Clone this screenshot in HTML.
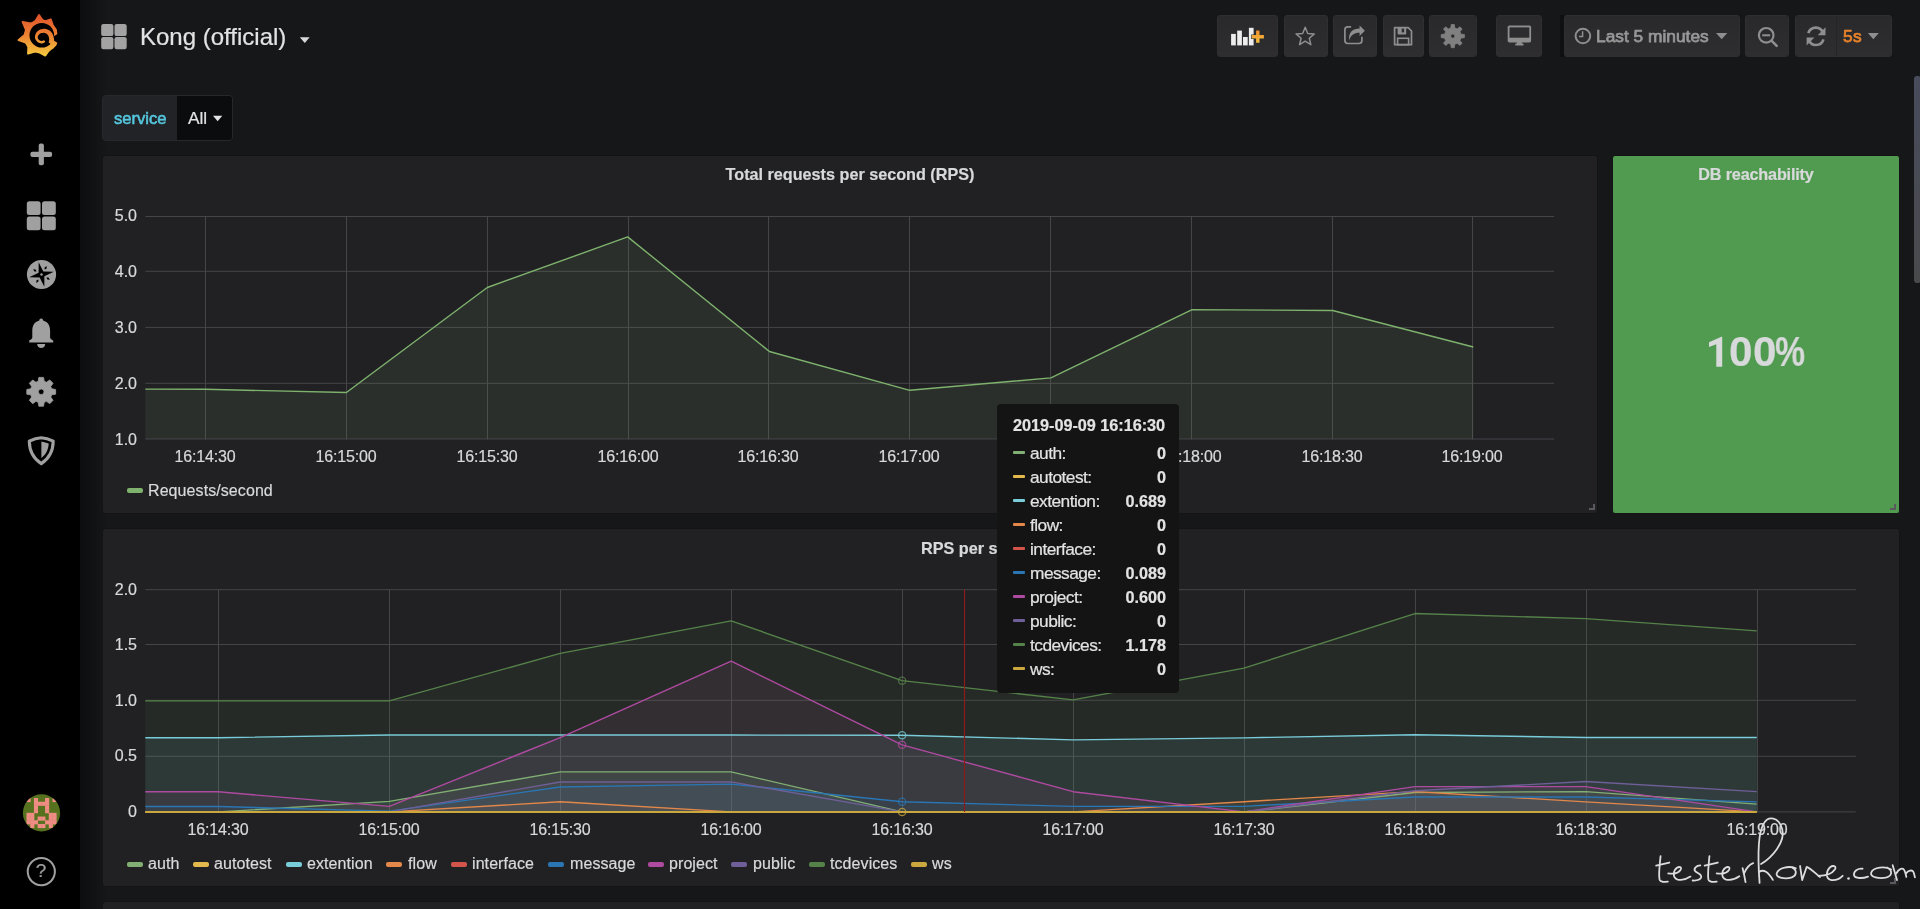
<!DOCTYPE html><html><head><meta charset="utf-8"><style>
html,body{margin:0;padding:0;} body{width:1920px;height:909px;overflow:hidden;background:#161719;font-family:"Liberation Sans", sans-serif;position:relative;-webkit-text-stroke:0.2px currentColor;}
.btn{position:absolute;top:15px;height:42px;box-sizing:border-box;border:1px solid #2f2f32;border-radius:3px;background:linear-gradient(to bottom,#29292c,#2e2e31);}
div{will-change:transform;}
</style></head><body>
<div style="position:absolute;left:80px;top:0;width:26px;height:909px;background:linear-gradient(to right,rgba(0,0,0,0.4),rgba(0,0,0,0));"></div>
<div style="position:absolute;left:102px;top:155px;width:1496px;height:359px;background:#212124;border-radius:3px;box-sizing:border-box;border:1px solid #141414;"></div>
<div style="position:absolute;left:1612px;top:155px;width:288px;height:359px;background:#519b50;border-radius:3px;box-sizing:border-box;border:1px solid #141414;"></div>
<div style="position:absolute;left:102px;top:528px;width:1798px;height:359px;background:#212124;border-radius:3px;box-sizing:border-box;border:1px solid #141414;"></div>
<div style="position:absolute;left:102px;top:901px;width:1798px;height:39px;background:#212124;border-radius:3px;box-sizing:border-box;border:1px solid #141414;"></div>
<svg style="position:absolute;left:0;top:0" width="1920" height="909"><line x1="145.3" y1="439.0" x2="1554.1" y2="439.0" stroke="#454548" stroke-width="1"/><line x1="145.3" y1="383.3" x2="1554.1" y2="383.3" stroke="#454548" stroke-width="1"/><line x1="145.3" y1="327.4" x2="1554.1" y2="327.4" stroke="#454548" stroke-width="1"/><line x1="145.3" y1="271.3" x2="1554.1" y2="271.3" stroke="#454548" stroke-width="1"/><line x1="145.3" y1="216.5" x2="1554.1" y2="216.5" stroke="#454548" stroke-width="1"/><line x1="205.5" y1="216" x2="205.5" y2="439.5" stroke="#454548" stroke-width="1"/><line x1="346.5" y1="216" x2="346.5" y2="439.5" stroke="#454548" stroke-width="1"/><line x1="487.5" y1="216" x2="487.5" y2="439.5" stroke="#454548" stroke-width="1"/><line x1="628.5" y1="216" x2="628.5" y2="439.5" stroke="#454548" stroke-width="1"/><line x1="768.5" y1="216" x2="768.5" y2="439.5" stroke="#454548" stroke-width="1"/><line x1="909.5" y1="216" x2="909.5" y2="439.5" stroke="#454548" stroke-width="1"/><line x1="1050.5" y1="216" x2="1050.5" y2="439.5" stroke="#454548" stroke-width="1"/><line x1="1191.5" y1="216" x2="1191.5" y2="439.5" stroke="#454548" stroke-width="1"/><line x1="1332.5" y1="216" x2="1332.5" y2="439.5" stroke="#454548" stroke-width="1"/><line x1="1472.5" y1="216" x2="1472.5" y2="439.5" stroke="#454548" stroke-width="1"/><polygon points="145.3,389.1 205.1,389.3 346.4,392.5 487.3,287.5 627.7,236.9 769.4,351.5 909.8,390.3 1050.9,377.9 1192.1,309.6 1332.7,310.5 1473.3,347 1473.3,438.8 145.3,438.8" fill="#7EB26D" fill-opacity="0.1"/><polyline points="145.3,389.1 205.1,389.3 346.4,392.5 487.3,287.5 627.7,236.9 769.4,351.5 909.8,390.3 1050.9,377.9 1192.1,309.6 1332.7,310.5 1473.3,347" fill="none" stroke="#7EB26D" stroke-width="1.4" stroke-linejoin="round"/><line x1="145.3" y1="811.9" x2="1855.8" y2="811.9" stroke="#454548" stroke-width="1"/><line x1="145.3" y1="756.3" x2="1855.8" y2="756.3" stroke="#454548" stroke-width="1"/><line x1="145.3" y1="700.3" x2="1855.8" y2="700.3" stroke="#454548" stroke-width="1"/><line x1="145.3" y1="644.5" x2="1855.8" y2="644.5" stroke="#454548" stroke-width="1"/><line x1="145.3" y1="589.7" x2="1855.8" y2="589.7" stroke="#454548" stroke-width="1"/><line x1="218.5" y1="589.2" x2="218.5" y2="812.4" stroke="#454548" stroke-width="1"/><line x1="389.5" y1="589.2" x2="389.5" y2="812.4" stroke="#454548" stroke-width="1"/><line x1="560.5" y1="589.2" x2="560.5" y2="812.4" stroke="#454548" stroke-width="1"/><line x1="731.5" y1="589.2" x2="731.5" y2="812.4" stroke="#454548" stroke-width="1"/><line x1="902.5" y1="589.2" x2="902.5" y2="812.4" stroke="#454548" stroke-width="1"/><line x1="1073.5" y1="589.2" x2="1073.5" y2="812.4" stroke="#454548" stroke-width="1"/><line x1="1244.5" y1="589.2" x2="1244.5" y2="812.4" stroke="#454548" stroke-width="1"/><line x1="1415.5" y1="589.2" x2="1415.5" y2="812.4" stroke="#454548" stroke-width="1"/><line x1="1586.5" y1="589.2" x2="1586.5" y2="812.4" stroke="#454548" stroke-width="1"/><line x1="1757.5" y1="589.2" x2="1757.5" y2="812.4" stroke="#454548" stroke-width="1"/><polygon points="145.3,811.9 218.4,811.9 389.33,801.35 560.26,771.92 731.19,771.92 902.12,811.9 1073.05,811.9 1243.98,811.9 1414.91,792.47 1585.84,791.58 1756.77,804.13 1756.77,811.9 145.3,811.9" fill="#82af74" fill-opacity="0.1"/><polygon points="145.3,737.72 218.4,737.72 389.33,735.05 560.26,735.05 731.19,735.05 902.12,735.28 1073.05,739.83 1243.98,737.83 1414.91,734.72 1585.84,737.5 1756.77,737.5 1756.77,811.9 145.3,811.9" fill="#79ccd9" fill-opacity="0.1"/><polygon points="145.3,811.9 218.4,811.9 389.33,811.9 560.26,801.79 731.19,811.9 902.12,811.9 1073.05,811.9 1243.98,801.68 1414.91,791.58 1585.84,801.91 1756.77,811.9 1756.77,811.9 145.3,811.9" fill="#e3884a" fill-opacity="0.1"/><polygon points="145.3,806.57 218.4,806.57 389.33,811.12 560.26,787.02 731.19,784.14 902.12,801.79 1073.05,806.35 1243.98,806.35 1414.91,797.02 1585.84,797.02 1756.77,801.91 1756.77,811.9 145.3,811.9" fill="#2a75b3" fill-opacity="0.1"/><polygon points="145.3,791.8 218.4,791.8 389.33,806.35 560.26,737.61 731.19,661.09 902.12,744.83 1073.05,791.69 1243.98,811.9 1414.91,786.58 1585.84,786.58 1756.77,811.9 1756.77,811.9 145.3,811.9" fill="#af4aa1" fill-opacity="0.1"/><polygon points="145.3,811.9 218.4,811.9 389.33,811.9 560.26,782.03 731.19,781.92 902.12,811.9 1073.05,811.9 1243.98,811.9 1414.91,790.8 1585.84,781.47 1756.77,791.58 1756.77,811.9 145.3,811.9" fill="#6f5f98" fill-opacity="0.1"/><polygon points="145.3,700.85 218.4,700.85 389.33,700.85 560.26,653.43 731.19,620.89 902.12,680.64 1073.05,699.85 1243.98,668.09 1414.91,613.56 1585.84,618.67 1756.77,630.89 1756.77,811.9 145.3,811.9" fill="#558249" fill-opacity="0.1"/><polyline points="145.3,811.9 218.4,811.9 389.33,801.35 560.26,771.92 731.19,771.92 902.12,811.9 1073.05,811.9 1243.98,811.9 1414.91,792.47 1585.84,791.58 1756.77,804.13" fill="none" stroke="#82af74" stroke-width="1.4" stroke-linejoin="round"/><polyline points="145.3,811.9 218.4,811.9 389.33,811.9 560.26,811.9 731.19,811.9 902.12,811.9 1073.05,811.9 1243.98,811.9 1414.91,811.9 1585.84,811.9 1756.77,811.9" fill="none" stroke="#e3b84c" stroke-width="1.4" stroke-linejoin="round"/><polyline points="145.3,737.72 218.4,737.72 389.33,735.05 560.26,735.05 731.19,735.05 902.12,735.28 1073.05,739.83 1243.98,737.83 1414.91,734.72 1585.84,737.5 1756.77,737.5" fill="none" stroke="#79ccd9" stroke-width="1.4" stroke-linejoin="round"/><polyline points="145.3,811.9 218.4,811.9 389.33,811.9 560.26,801.79 731.19,811.9 902.12,811.9 1073.05,811.9 1243.98,801.68 1414.91,791.58 1585.84,801.91 1756.77,811.9" fill="none" stroke="#e3884a" stroke-width="1.4" stroke-linejoin="round"/><polyline points="145.3,811.9 218.4,811.9 389.33,811.9 560.26,811.9 731.19,811.9 902.12,811.9 1073.05,811.9 1243.98,811.9 1414.91,811.9 1585.84,811.9 1756.77,811.9" fill="none" stroke="#d2544a" stroke-width="1.4" stroke-linejoin="round"/><polyline points="145.3,806.57 218.4,806.57 389.33,811.12 560.26,787.02 731.19,784.14 902.12,801.79 1073.05,806.35 1243.98,806.35 1414.91,797.02 1585.84,797.02 1756.77,801.91" fill="none" stroke="#2a75b3" stroke-width="1.4" stroke-linejoin="round"/><polyline points="145.3,791.8 218.4,791.8 389.33,806.35 560.26,737.61 731.19,661.09 902.12,744.83 1073.05,791.69 1243.98,811.9 1414.91,786.58 1585.84,786.58 1756.77,811.9" fill="none" stroke="#af4aa1" stroke-width="1.4" stroke-linejoin="round"/><polyline points="145.3,811.9 218.4,811.9 389.33,811.9 560.26,782.03 731.19,781.92 902.12,811.9 1073.05,811.9 1243.98,811.9 1414.91,790.8 1585.84,781.47 1756.77,791.58" fill="none" stroke="#6f5f98" stroke-width="1.4" stroke-linejoin="round"/><polyline points="145.3,700.85 218.4,700.85 389.33,700.85 560.26,653.43 731.19,620.89 902.12,680.64 1073.05,699.85 1243.98,668.09 1414.91,613.56 1585.84,618.67 1756.77,630.89" fill="none" stroke="#558249" stroke-width="1.4" stroke-linejoin="round"/><polyline points="145.3,811.9 218.4,811.9 389.33,811.9 560.26,811.9 731.19,811.9 902.12,811.9 1073.05,811.9 1243.98,811.9 1414.91,811.9 1585.84,811.9 1756.77,811.9" fill="none" stroke="#caa83d" stroke-width="1.4" stroke-linejoin="round"/><line x1="145.3" y1="812" x2="1756.7700000000002" y2="812" stroke="#caa83d" stroke-width="2"/><line x1="964.5" y1="589.8" x2="964.5" y2="811.9" stroke="#8a1c1c" stroke-width="1.2"/><circle cx="902.12" cy="680.64" r="3.6" fill="none" stroke="#558249" stroke-width="1.3" stroke-opacity="0.75"/><circle cx="902.12" cy="735.28" r="3.6" fill="none" stroke="#79ccd9" stroke-width="1.3" stroke-opacity="0.75"/><circle cx="902.12" cy="744.83" r="3.6" fill="none" stroke="#af4aa1" stroke-width="1.3" stroke-opacity="0.75"/><circle cx="902.12" cy="801.79" r="3.6" fill="none" stroke="#2a75b3" stroke-width="1.3" stroke-opacity="0.75"/><circle cx="902.12" cy="811.9" r="3.6" fill="none" stroke="#caa83d" stroke-width="1.3" stroke-opacity="0.75"/></svg>
<div style="position:absolute;left:0;top:0;width:80px;height:909px;background:#000;"></div>
<svg style="position:absolute;left:0;top:0" width="80" height="70"><defs><linearGradient id="lg" gradientUnits="userSpaceOnUse" x1="0" y1="14" x2="0" y2="57"><stop offset="0" stop-color="#e0502a"/><stop offset="0.5" stop-color="#ec8333"/><stop offset="1" stop-color="#f6cd40"/></linearGradient></defs><polygon points="22.6,21.9 30.88,23.41 33.3,22.32 35.55,20.9 39,15 42.45,20.07 44.35,20.78 46.36,20.94 50.7,19.4 52.61,24.92 54.16,27.44 55.92,29.82 56.4,34.2 57.28,37.24 56.64,39.26 56.53,41.38 55.7,44.5 52.86,47.62 50.56,49.15 48.47,50.95 45.3,55.5 40.35,52.79 37.62,52.06 34.82,51.63 28.1,53.6 28.35,46.96 27.22,44.7 25.74,42.66 18.6,40 24.56,34.94 25.42,32.36 25.93,29.7" fill="url(#lg)" stroke="url(#lg)" stroke-width="2.0" stroke-linejoin="round"/><circle cx="41.8" cy="35.3" r="12.3" fill="#000"/><polygon points="57.5,34 54,36.3 53.8,40.6 56.9,42.6 62,42.6 62,34" fill="#000"/><polygon points="52.73,45.76 53.08,45.03 53.38,44.28 53.62,43.52 53.81,42.76 53.94,42 54.03,41.24 54.06,40.49 54.04,39.75 53.98,39.03 53.87,38.32 53.71,37.63 53.6,36.96 53.46,36.3 53.28,35.66 53.06,35.03 52.8,34.42 52.5,33.84 52.17,33.28 51.81,32.75 51.42,32.25 51,31.77 50.56,31.33 50.09,30.92 49.59,30.54 49.08,30.2 48.56,29.9 48.02,29.63 47.47,29.4 46.9,29.21 46.34,29.05 45.77,28.94 45.19,28.86 44.62,28.82 44.05,28.81 43.49,28.84 42.94,28.9 42.39,28.95 41.85,29.03 41.32,29.15 40.79,29.3 40.28,29.48 39.78,29.69 39.3,29.93 38.84,30.2 38.39,30.5 37.97,30.83 37.57,31.18 37.19,31.56 36.84,31.95 36.52,32.37 36.22,32.81 35.95,33.26 35.72,33.72 35.51,34.2 35.33,34.69 35.19,35.19 35.08,35.69 35,36.2 34.95,36.71 34.94,37.22 34.98,37.73 35.1,38.23 35.25,38.72 35.44,39.18 35.65,39.63 35.88,40.06 36.14,40.47 36.43,40.85 36.73,41.21 37.05,41.54 37.39,41.85 37.75,42.13 38.11,42.39 38.49,42.61 38.88,42.81 39.27,42.98 39.67,43.12 40.07,43.23 40.47,43.32 40.87,43.37 41.27,43.4 41.66,43.4 42.05,43.38 42.42,43.33 42.79,43.25 43.15,43.14 43.48,42.99 43.8,42.81 44.1,42.62 44.38,42.41 43.83,40.48 43.64,40.53 43.46,40.57 43.27,40.59 43.08,40.6 42.89,40.65 42.69,40.73 42.47,40.8 42.25,40.85 42.02,40.89 41.78,40.91 41.54,40.91 41.29,40.9 41.03,40.86 40.78,40.81 40.52,40.74 40.26,40.65 40.01,40.53 39.76,40.4 39.51,40.25 39.27,40.07 39.04,39.88 38.82,39.67 38.61,39.44 38.41,39.19 38.23,38.92 38.07,38.63 37.92,38.33 37.79,38.02 37.68,37.69 37.68,37.35 37.73,37.02 37.8,36.69 37.89,36.37 38.01,36.06 38.14,35.76 38.29,35.46 38.46,35.18 38.64,34.91 38.84,34.66 39.05,34.42 39.28,34.19 39.52,33.98 39.78,33.79 40.04,33.62 40.31,33.46 40.59,33.32 40.88,33.2 41.17,33.1 41.47,33.02 41.76,32.95 42.07,32.91 42.37,32.89 42.67,32.88 42.97,32.9 43.27,32.86 43.57,32.84 43.88,32.84 44.19,32.86 44.5,32.9 44.81,32.96 45.12,33.04 45.43,33.14 45.73,33.26 46.03,33.4 46.32,33.56 46.6,33.75 46.87,33.95 47.13,34.17 47.38,34.41 47.61,34.67 47.83,34.94 48.03,35.23 48.22,35.54 48.38,35.85 48.53,36.19 48.66,36.53 48.76,36.88 48.84,37.25 48.91,37.62 49.02,38 49.11,38.39 49.17,38.8 49.2,39.22 49.21,39.65 49.19,40.09 49.13,40.53 49.04,40.97 48.93,41.41 48.78,41.85 48.59,42.29" fill="url(#lg)"/><circle cx="44.10" cy="41.45" r="1.0" fill="url(#lg)"/></svg>
<svg style="position:absolute;left:0;top:0" width="80" height="909"><rect x="38.7" y="143.5" width="5.2" height="21.7" rx="2" fill="#a0a0a0"/><rect x="30.4" y="151.8" width="21.7" height="5.2" rx="2" fill="#a0a0a0"/><rect x="26.8" y="201.2" width="13.8" height="13.8" rx="2.5" fill="#a0a0a0"/><rect x="26.8" y="216.4" width="13.8" height="13.8" rx="2.5" fill="#a0a0a0"/><rect x="42.0" y="201.2" width="13.8" height="13.8" rx="2.5" fill="#a0a0a0"/><rect x="42.0" y="216.4" width="13.8" height="13.8" rx="2.5" fill="#a0a0a0"/><circle cx="41.5" cy="274.5" r="14.6" fill="#a0a0a0"/><polygon points="38.67,262.22 43.3,271.62 53.78,271.67 44.38,276.3 44.33,286.78 39.7,277.38 29.22,277.33 38.62,272.7" fill="#000"/><polygon points="44.57,269.58 46.46,268.64 46.75,266.1 44.59,267.47" fill="#000"/><polygon points="46.42,277.57 47.36,279.46 49.9,279.75 48.53,277.59" fill="#000"/><polygon points="38.43,279.42 36.54,280.36 36.25,282.9 38.41,281.53" fill="#000"/><polygon points="36.58,271.43 35.64,269.54 33.1,269.25 34.47,271.41" fill="#000"/><circle cx="41.5" cy="274.5" r="1.2" fill="#a0a0a0"/><path d="M41.2,318.6 C39.6,318.6 39.3,320.2 39.3,320.6 C34.2,322 32.3,326 32.3,331 L32.3,337.5 C32.3,339 30.4,339.6 29.2,340.6 L29.2,342.6 L53.2,342.6 L53.2,340.6 C52,339.6 50.1,339 50.1,337.5 L50.1,331 C50.1,326 48.2,322 43.1,320.6 C43.1,320.2 42.8,318.6 41.2,318.6 Z" fill="#a0a0a0"/><path d="M37.2,344 L45.2,344 C45.2,346.5 43.4,348 41.2,348 C39,348 37.2,346.5 37.2,344 Z" fill="#a0a0a0"/><path d="M51.67,388.78 L55.61,389.45 L55.61,394.15 L51.67,394.82 L51.27,395.97 L50.74,397.07 L53.05,400.32 L49.72,403.65 L46.47,401.34 L45.37,401.87 L44.22,402.27 L43.55,406.21 L38.85,406.21 L38.18,402.27 L37.03,401.87 L35.93,401.34 L32.68,403.65 L29.35,400.32 L31.66,397.07 L31.13,395.97 L30.73,394.82 L26.79,394.15 L26.79,389.45 L30.73,388.78 L31.13,387.63 L31.66,386.53 L29.35,383.28 L32.68,379.95 L35.93,382.26 L37.03,381.73 L38.18,381.33 L38.85,377.39 L43.55,377.39 L44.22,381.33 L45.37,381.73 L46.47,382.26 L49.72,379.95 L53.05,383.28 L50.74,386.53 L51.27,387.63 Z M44.0,391.8 a2.8,2.8 0 1,0 -5.6,0 a2.8,2.8 0 1,0 5.6,0 Z" fill="#a0a0a0" fill-rule="evenodd" stroke="#a0a0a0" stroke-width="0.8" stroke-linejoin="round"/><path d="M41.25,437.7 C45.3,437.8 49.5,439.2 53.2,441.2 C53.1,450.8 49.2,458.4 41.25,463.6 C33.3,458.4 29.4,450.8 29.3,441.2 C33,439.2 37.2,437.8 41.25,437.7 Z" fill="none" stroke="#a0a0a0" stroke-width="3.1" stroke-linejoin="round"/><path d="M41.4,441.4 L48.7,443.5 C48.4,449.6 46,454.4 41.4,458.0 Z" fill="#a0a0a0"/><defs><clipPath id="avc"><circle cx="41.5" cy="812.9" r="18.6"/></clipPath></defs><g clip-path="url(#avc)"><rect x="20" y="790" width="45" height="45" fill="#56721f"/><rect x="26.50" y="798.00" width="4.11" height="4.11" fill="#ef8c84"/><rect x="33.92" y="798.00" width="4.11" height="4.11" fill="#ef8c84"/><rect x="45.05" y="798.00" width="4.11" height="4.11" fill="#ef8c84"/><rect x="52.47" y="798.00" width="4.11" height="4.11" fill="#ef8c84"/><rect x="33.92" y="801.71" width="4.11" height="4.11" fill="#ef8c84"/><rect x="37.63" y="801.71" width="4.11" height="4.11" fill="#ef8c84"/><rect x="41.34" y="801.71" width="4.11" height="4.11" fill="#ef8c84"/><rect x="45.05" y="801.71" width="4.11" height="4.11" fill="#ef8c84"/><rect x="33.92" y="805.42" width="4.11" height="4.11" fill="#ef8c84"/><rect x="45.05" y="805.42" width="4.11" height="4.11" fill="#ef8c84"/><rect x="33.92" y="809.13" width="4.11" height="4.11" fill="#ef8c84"/><rect x="45.05" y="809.13" width="4.11" height="4.11" fill="#ef8c84"/><rect x="26.50" y="812.84" width="4.11" height="4.11" fill="#ef8c84"/><rect x="30.21" y="812.84" width="4.11" height="4.11" fill="#ef8c84"/><rect x="48.76" y="812.84" width="4.11" height="4.11" fill="#ef8c84"/><rect x="52.47" y="812.84" width="4.11" height="4.11" fill="#ef8c84"/><rect x="26.50" y="816.55" width="4.11" height="4.11" fill="#ef8c84"/><rect x="30.21" y="816.55" width="4.11" height="4.11" fill="#ef8c84"/><rect x="37.63" y="816.55" width="4.11" height="4.11" fill="#ef8c84"/><rect x="41.34" y="816.55" width="4.11" height="4.11" fill="#ef8c84"/><rect x="48.76" y="816.55" width="4.11" height="4.11" fill="#ef8c84"/><rect x="52.47" y="816.55" width="4.11" height="4.11" fill="#ef8c84"/><rect x="26.50" y="820.26" width="4.11" height="4.11" fill="#ef8c84"/><rect x="30.21" y="820.26" width="4.11" height="4.11" fill="#ef8c84"/><rect x="33.92" y="820.26" width="4.11" height="4.11" fill="#ef8c84"/><rect x="45.05" y="820.26" width="4.11" height="4.11" fill="#ef8c84"/><rect x="48.76" y="820.26" width="4.11" height="4.11" fill="#ef8c84"/><rect x="52.47" y="820.26" width="4.11" height="4.11" fill="#ef8c84"/><rect x="30.21" y="823.97" width="4.11" height="4.11" fill="#ef8c84"/><rect x="37.63" y="823.97" width="4.11" height="4.11" fill="#ef8c84"/><rect x="41.34" y="823.97" width="4.11" height="4.11" fill="#ef8c84"/><rect x="48.76" y="823.97" width="4.11" height="4.11" fill="#ef8c84"/></g><circle cx="41.3" cy="871.6" r="13.6" fill="none" stroke="#a0a0a0" stroke-width="2"/></svg>
<div style="position:absolute;left:21.3px;top:861px;width:40px;text-align:center;font-size:19px;line-height:20px;color:#a0a0a0;">?</div>
<svg style="position:absolute;left:0;top:0" width="400" height="80"><rect x="101.2" y="23.9" width="12.2" height="12.2" rx="2.2" fill="#a3a3a3"/><rect x="101.2" y="37.1" width="12.2" height="12.2" rx="2.2" fill="#a3a3a3"/><rect x="114.5" y="23.9" width="12.2" height="12.2" rx="2.2" fill="#a3a3a3"/><rect x="114.5" y="37.1" width="12.2" height="12.2" rx="2.2" fill="#a3a3a3"/><polygon points="299.8,37.3 309.7,37.3 304.75,43.1" fill="#d8d9da"/></svg>
<div style="position:absolute;top:25px;font-size:24px;line-height:24px;color:#e3e3e3;font-weight:400;white-space:nowrap;letter-spacing:0px;left:139.5px;">Kong (official)</div>
<div class="btn" style="left:1217px;width:61px;"></div>
<div class="btn" style="left:1284px;width:44px;"></div>
<div class="btn" style="left:1333px;width:44px;"></div>
<div class="btn" style="left:1382.5px;width:41.0px;"></div>
<div class="btn" style="left:1429px;width:48px;"></div>
<div class="btn" style="left:1496px;width:46px;"></div>
<div class="btn" style="left:1564px;width:176px;"></div>
<div class="btn" style="left:1745px;width:44px;"></div>
<div class="btn" style="left:1795px;width:97px;"></div>
<div style="position:absolute;left:1560px;top:15px;width:4px;height:42px;background:#0f1012;"></div>
<div style="position:absolute;left:1836px;top:16px;width:1px;height:40px;background:#252528;"></div>
<svg style="position:absolute;left:1200px;top:0" width="720" height="70" viewBox="1200 0 720 70"><defs><linearGradient id="plg" x1="0" y1="0" x2="0" y2="1"><stop offset="0" stop-color="#ee8f2e"/><stop offset="1" stop-color="#f6c03e"/></linearGradient></defs><rect x="1231.1" y="33.9" width="4.7" height="11.5" fill="#ececec"/><rect x="1237.2" y="30.6" width="4.7" height="14.8" fill="#ececec"/><rect x="1243.0" y="37.0" width="4.7" height="8.4" fill="#ececec"/><rect x="1248.9" y="27.8" width="4.7" height="17.6" fill="#ececec"/><path d="M1256.1,30.6 h3.4 v4.4 h4.4 v3.4 h-4.4 v4.4 h-3.4 v-4.4 h-4.4 v-3.4 h4.4 Z" fill="url(#plg)" stroke="#2b2b2e" stroke-width="1.1" paint-order="stroke"/><polygon points="1305.2,27.3 1307.73,33.42 1314.33,33.93 1309.29,38.23 1310.84,44.67 1305.2,41.2 1299.56,44.67 1301.11,38.23 1296.07,33.93 1302.67,33.42" fill="none" stroke="#8e8e8e" stroke-width="1.5" stroke-linejoin="round"/><path d="M1351.1,26.9 L1347.8,26.9 C1346,26.9 1344.9,28 1344.9,29.8 L1344.9,40.6 C1344.9,42.4 1346,43.5 1347.8,43.5 L1359,43.5 C1360.8,43.5 1361.9,42.4 1361.9,40.6 L1361.9,36.8" fill="none" stroke="#8e8e8e" stroke-width="1.7"/><path d="M1364.9,30.7 L1359.6,25.4 L1359.6,28.6 C1353,28.6 1348.3,32 1349.1,40.6 C1350.6,35.2 1354,32.8 1359.6,32.8 L1359.6,36.0 Z" fill="#8e8e8e"/><path d="M1394.6,27.7 L1408.2,27.7 L1411.5,31.0 L1411.5,44.7 L1394.6,44.7 Z" fill="none" stroke="#8e8e8e" stroke-width="1.7" stroke-linejoin="round"/><rect x="1397.6" y="27.7" width="8.6" height="6.8" rx="0.8" fill="#8e8e8e"/><rect x="1401.7" y="28.6" width="2.4" height="3.8" fill="#2c2c2f"/><rect x="1397.6" y="38.3" width="11.0" height="6.4" fill="none" stroke="#8e8e8e" stroke-width="1.6"/><path d="M1460.97,34.15 L1464.39,34.53 L1464.39,37.67 L1460.97,38.05 L1460.56,39.31 L1459.96,40.5 L1462.11,43.18 L1459.88,45.41 L1457.2,43.26 L1456.01,43.86 L1454.75,44.27 L1454.37,47.69 L1451.23,47.69 L1450.85,44.27 L1449.59,43.86 L1448.4,43.26 L1445.72,45.41 L1443.49,43.18 L1445.64,40.5 L1445.04,39.31 L1444.63,38.05 L1441.21,37.67 L1441.21,34.53 L1444.63,34.15 L1445.04,32.89 L1445.64,31.7 L1443.49,29.02 L1445.72,26.79 L1448.4,28.94 L1449.59,28.34 L1450.85,27.93 L1451.23,24.51 L1454.37,24.51 L1454.75,27.93 L1456.01,28.34 L1457.2,28.94 L1459.88,26.79 L1462.11,29.02 L1459.96,31.7 L1460.56,32.89 Z M1454.8999999999999,36.1 a2.1,2.1 0 1,0 -4.2,0 a2.1,2.1 0 1,0 4.2,0 Z" fill="#808080" fill-rule="evenodd" stroke="#808080" stroke-width="0.8" stroke-linejoin="round"/><rect x="1507.7" y="25.6" width="23.4" height="16.8" rx="1.6" fill="#8e8e8e"/><rect x="1509.5" y="27.4" width="19.8" height="10.3" fill="#2c2c2f"/><rect x="1516.9" y="42" width="5" height="2.2" fill="#8e8e8e"/><rect x="1515.3" y="43.6" width="8.2" height="1.9" rx="0.6" fill="#8e8e8e"/><circle cx="1582.9" cy="36" r="7.3" fill="none" stroke="#8e8e8e" stroke-width="2"/><path d="M1582.6,31.2 L1582.6,36.6 L1579,36.6" fill="none" stroke="#8e8e8e" stroke-width="1.5"/><polygon points="1716,32.9 1727.3,32.9 1721.65,39.2" fill="#8e8e8e"/><polygon points="1867.9,32.9 1878.8,32.9 1873.35,39.2" fill="#8e8e8e"/><circle cx="1766.2" cy="35.3" r="7.3" fill="none" stroke="#8e8e8e" stroke-width="2.2"/><line x1="1762.2" y1="35.3" x2="1770.2" y2="35.3" stroke="#8e8e8e" stroke-width="2"/><line x1="1771.5" y1="40.6" x2="1776.7" y2="45.8" stroke="#8e8e8e" stroke-width="2.6" stroke-linecap="round"/><path d="M1823.2,33.3 C1822,29.6 1819,27.6 1815.9,27.6 C1812.2,27.6 1809.3,29.9 1808.3,33.2" fill="none" stroke="#8e8e8e" stroke-width="2.6"/><polygon points="1825.5,27.2 1825.5,35.2 1817.7,35.2" fill="#8e8e8e"/><path d="M1808.6,39.3 C1809.8,43 1812.8,45 1815.9,45 C1819.6,45 1822.5,42.7 1823.5,39.4" fill="none" stroke="#8e8e8e" stroke-width="2.6"/><polygon points="1806.6,45.4 1806.6,37.4 1814.4,37.4" fill="#8e8e8e"/></svg>
<div style="position:absolute;top:28px;font-size:17.33px;line-height:17.33px;color:#979797;font-weight:400;white-space:nowrap;letter-spacing:0px;-webkit-text-stroke:0.75px currentColor;left:1595.5px;">Last 5 minutes</div>
<div style="position:absolute;top:28px;font-size:17.33px;line-height:17.33px;color:#e8822a;font-weight:400;white-space:nowrap;letter-spacing:0.3px;-webkit-text-stroke:0.75px currentColor;left:1842.5px;">5s</div>
<div style="position:absolute;left:102px;top:95px;width:131px;height:46px;box-sizing:border-box;border:1px solid #26282c;border-radius:4px;background:#212327;"></div>
<div style="position:absolute;left:177.4px;top:96px;width:54.6px;height:44px;background:#0b0c0e;border-radius:0 3px 3px 0;"></div>
<div style="position:absolute;top:110.5px;font-size:16.6px;line-height:16.6px;color:#55c5dc;font-weight:400;white-space:nowrap;letter-spacing:0px;-webkit-text-stroke:0.6px currentColor;left:113.5px;">service</div>
<div style="position:absolute;top:110px;font-size:17.33px;line-height:17.33px;color:#e3e3e3;font-weight:400;white-space:nowrap;letter-spacing:-0.1px;left:188px;">All</div>
<svg style="position:absolute;left:0;top:0" width="300" height="160"><polygon points="213,115.7 222.3,115.7 217.65,121.2" fill="#e3e3e3"/></svg>
<div style="position:absolute;top:166.3px;font-size:16.2px;line-height:16.2px;color:#d8d9da;font-weight:700;white-space:nowrap;letter-spacing:0px;left:349.5px;width:1000px;text-align:center;">Total requests per second (RPS)</div>
<div style="position:absolute;top:166.3px;font-size:16.2px;line-height:16.2px;color:#d8d9da;font-weight:700;white-space:nowrap;letter-spacing:-0.17px;left:1255.5px;width:1000px;text-align:center;">DB reachability</div>
<svg style="position:absolute;left:1700px;top:330px" width="30" height="45" viewBox="1700 330 30 45"><polygon points="1722.2,336.8 1722.2,366.8 1716.3,366.8 1716.3,344.3 1709,347.0 1709,342.2 1721.4,336.8" fill="#d8d9da"/></svg>
<div style="position:absolute;top:330.5px;font-size:42.2px;line-height:42.2px;color:#d8d9da;font-weight:700;white-space:nowrap;letter-spacing:0px;left:1728.7px;">0</div>
<div style="position:absolute;top:330.5px;font-size:42.2px;line-height:42.2px;color:#d8d9da;font-weight:700;white-space:nowrap;letter-spacing:0px;left:1753.3px;">0</div>
<div style="position:absolute;top:330.5px;font-size:42.2px;line-height:42.2px;color:#d8d9da;font-weight:700;white-space:nowrap;letter-spacing:0px;transform:scaleX(0.8);transform-origin:0 0;left:1774.5px;">%</div>
<div style="position:absolute;top:432px;font-size:16px;line-height:16px;color:#d8d9da;font-weight:400;white-space:nowrap;letter-spacing:0px;left:-863px;width:1000px;text-align:right;">1.0</div>
<div style="position:absolute;top:376px;font-size:16px;line-height:16px;color:#d8d9da;font-weight:400;white-space:nowrap;letter-spacing:0px;left:-863px;width:1000px;text-align:right;">2.0</div>
<div style="position:absolute;top:320px;font-size:16px;line-height:16px;color:#d8d9da;font-weight:400;white-space:nowrap;letter-spacing:0px;left:-863px;width:1000px;text-align:right;">3.0</div>
<div style="position:absolute;top:264px;font-size:16px;line-height:16px;color:#d8d9da;font-weight:400;white-space:nowrap;letter-spacing:0px;left:-863px;width:1000px;text-align:right;">4.0</div>
<div style="position:absolute;top:208px;font-size:16px;line-height:16px;color:#d8d9da;font-weight:400;white-space:nowrap;letter-spacing:0px;left:-863px;width:1000px;text-align:right;">5.0</div>
<div style="position:absolute;top:449px;font-size:16px;line-height:16px;color:#d8d9da;font-weight:400;white-space:nowrap;letter-spacing:-0.15px;left:-294.9px;width:1000px;text-align:center;">16:14:30</div>
<div style="position:absolute;top:449px;font-size:16px;line-height:16px;color:#d8d9da;font-weight:400;white-space:nowrap;letter-spacing:-0.15px;left:-154.10000000000002px;width:1000px;text-align:center;">16:15:00</div>
<div style="position:absolute;top:449px;font-size:16px;line-height:16px;color:#d8d9da;font-weight:400;white-space:nowrap;letter-spacing:-0.15px;left:-13.299999999999955px;width:1000px;text-align:center;">16:15:30</div>
<div style="position:absolute;top:449px;font-size:16px;line-height:16px;color:#d8d9da;font-weight:400;white-space:nowrap;letter-spacing:-0.15px;left:127.5px;width:1000px;text-align:center;">16:16:00</div>
<div style="position:absolute;top:449px;font-size:16px;line-height:16px;color:#d8d9da;font-weight:400;white-space:nowrap;letter-spacing:-0.15px;left:268.30000000000007px;width:1000px;text-align:center;">16:16:30</div>
<div style="position:absolute;top:449px;font-size:16px;line-height:16px;color:#d8d9da;font-weight:400;white-space:nowrap;letter-spacing:-0.15px;left:409.1px;width:1000px;text-align:center;">16:17:00</div>
<div style="position:absolute;top:449px;font-size:16px;line-height:16px;color:#d8d9da;font-weight:400;white-space:nowrap;letter-spacing:-0.15px;left:549.9000000000001px;width:1000px;text-align:center;">16:17:30</div>
<div style="position:absolute;top:449px;font-size:16px;line-height:16px;color:#d8d9da;font-weight:400;white-space:nowrap;letter-spacing:-0.15px;left:690.7px;width:1000px;text-align:center;">16:18:00</div>
<div style="position:absolute;top:449px;font-size:16px;line-height:16px;color:#d8d9da;font-weight:400;white-space:nowrap;letter-spacing:-0.15px;left:831.5px;width:1000px;text-align:center;">16:18:30</div>
<div style="position:absolute;top:449px;font-size:16px;line-height:16px;color:#d8d9da;font-weight:400;white-space:nowrap;letter-spacing:-0.15px;left:972.3px;width:1000px;text-align:center;">16:19:00</div>
<div style="position:absolute;left:127px;top:488.3px;width:15.5px;height:4.5px;border-radius:2px;background:#7EB26D;"></div>
<div style="position:absolute;top:482.5px;font-size:16px;line-height:16px;color:#d8d9da;font-weight:400;white-space:nowrap;letter-spacing:0.08px;left:147.5px;">Requests/second</div>
<div style="position:absolute;top:540.3px;font-size:16.2px;line-height:16.2px;color:#d8d9da;font-weight:700;white-space:nowrap;letter-spacing:0px;left:920.5px;">RPS per service (All)</div>
<div style="position:absolute;top:804px;font-size:16px;line-height:16px;color:#d8d9da;font-weight:400;white-space:nowrap;letter-spacing:0px;left:-863px;width:1000px;text-align:right;">0</div>
<div style="position:absolute;top:748px;font-size:16px;line-height:16px;color:#d8d9da;font-weight:400;white-space:nowrap;letter-spacing:0px;left:-863px;width:1000px;text-align:right;">0.5</div>
<div style="position:absolute;top:693px;font-size:16px;line-height:16px;color:#d8d9da;font-weight:400;white-space:nowrap;letter-spacing:0px;left:-863px;width:1000px;text-align:right;">1.0</div>
<div style="position:absolute;top:637px;font-size:16px;line-height:16px;color:#d8d9da;font-weight:400;white-space:nowrap;letter-spacing:0px;left:-863px;width:1000px;text-align:right;">1.5</div>
<div style="position:absolute;top:582px;font-size:16px;line-height:16px;color:#d8d9da;font-weight:400;white-space:nowrap;letter-spacing:0px;left:-863px;width:1000px;text-align:right;">2.0</div>
<div style="position:absolute;top:822px;font-size:16px;line-height:16px;color:#d8d9da;font-weight:400;white-space:nowrap;letter-spacing:-0.15px;left:-281.6px;width:1000px;text-align:center;">16:14:30</div>
<div style="position:absolute;top:822px;font-size:16px;line-height:16px;color:#d8d9da;font-weight:400;white-space:nowrap;letter-spacing:-0.15px;left:-110.66999999999996px;width:1000px;text-align:center;">16:15:00</div>
<div style="position:absolute;top:822px;font-size:16px;line-height:16px;color:#d8d9da;font-weight:400;white-space:nowrap;letter-spacing:-0.15px;left:60.25999999999999px;width:1000px;text-align:center;">16:15:30</div>
<div style="position:absolute;top:822px;font-size:16px;line-height:16px;color:#d8d9da;font-weight:400;white-space:nowrap;letter-spacing:-0.15px;left:231.18999999999994px;width:1000px;text-align:center;">16:16:00</div>
<div style="position:absolute;top:822px;font-size:16px;line-height:16px;color:#d8d9da;font-weight:400;white-space:nowrap;letter-spacing:-0.15px;left:402.12px;width:1000px;text-align:center;">16:16:30</div>
<div style="position:absolute;top:822px;font-size:16px;line-height:16px;color:#d8d9da;font-weight:400;white-space:nowrap;letter-spacing:-0.15px;left:573.0500000000002px;width:1000px;text-align:center;">16:17:00</div>
<div style="position:absolute;top:822px;font-size:16px;line-height:16px;color:#d8d9da;font-weight:400;white-space:nowrap;letter-spacing:-0.15px;left:743.98px;width:1000px;text-align:center;">16:17:30</div>
<div style="position:absolute;top:822px;font-size:16px;line-height:16px;color:#d8d9da;font-weight:400;white-space:nowrap;letter-spacing:-0.15px;left:914.9100000000001px;width:1000px;text-align:center;">16:18:00</div>
<div style="position:absolute;top:822px;font-size:16px;line-height:16px;color:#d8d9da;font-weight:400;white-space:nowrap;letter-spacing:-0.15px;left:1085.8400000000001px;width:1000px;text-align:center;">16:18:30</div>
<div style="position:absolute;top:822px;font-size:16px;line-height:16px;color:#d8d9da;font-weight:400;white-space:nowrap;letter-spacing:-0.15px;left:1256.7700000000002px;width:1000px;text-align:center;">16:19:00</div>
<div style="position:absolute;left:127px;top:861.6px;width:15.5px;height:4.5px;border-radius:2px;background:#82af74;"></div>
<div style="position:absolute;top:856px;font-size:16px;line-height:16px;color:#d8d9da;font-weight:400;white-space:nowrap;letter-spacing:0.08px;left:148px;">auth</div>
<div style="position:absolute;left:193px;top:861.6px;width:15.5px;height:4.5px;border-radius:2px;background:#e3b84c;"></div>
<div style="position:absolute;top:856px;font-size:16px;line-height:16px;color:#d8d9da;font-weight:400;white-space:nowrap;letter-spacing:0.08px;left:214px;">autotest</div>
<div style="position:absolute;left:285.6px;top:861.6px;width:15.5px;height:4.5px;border-radius:2px;background:#79ccd9;"></div>
<div style="position:absolute;top:856px;font-size:16px;line-height:16px;color:#d8d9da;font-weight:400;white-space:nowrap;letter-spacing:0.08px;left:307px;">extention</div>
<div style="position:absolute;left:386px;top:861.6px;width:15.5px;height:4.5px;border-radius:2px;background:#e3884a;"></div>
<div style="position:absolute;top:856px;font-size:16px;line-height:16px;color:#d8d9da;font-weight:400;white-space:nowrap;letter-spacing:0.08px;left:408px;">flow</div>
<div style="position:absolute;left:450.6px;top:861.6px;width:15.5px;height:4.5px;border-radius:2px;background:#d2544a;"></div>
<div style="position:absolute;top:856px;font-size:16px;line-height:16px;color:#d8d9da;font-weight:400;white-space:nowrap;letter-spacing:0.08px;left:472px;">interface</div>
<div style="position:absolute;left:548.1px;top:861.6px;width:15.5px;height:4.5px;border-radius:2px;background:#2a75b3;"></div>
<div style="position:absolute;top:856px;font-size:16px;line-height:16px;color:#d8d9da;font-weight:400;white-space:nowrap;letter-spacing:0.08px;left:569.7px;">message</div>
<div style="position:absolute;left:647.8px;top:861.6px;width:15.5px;height:4.5px;border-radius:2px;background:#af4aa1;"></div>
<div style="position:absolute;top:856px;font-size:16px;line-height:16px;color:#d8d9da;font-weight:400;white-space:nowrap;letter-spacing:0.08px;left:669px;">project</div>
<div style="position:absolute;left:731.3px;top:861.6px;width:15.5px;height:4.5px;border-radius:2px;background:#6f5f98;"></div>
<div style="position:absolute;top:856px;font-size:16px;line-height:16px;color:#d8d9da;font-weight:400;white-space:nowrap;letter-spacing:0.08px;left:752.8px;">public</div>
<div style="position:absolute;left:808.7px;top:861.6px;width:15.5px;height:4.5px;border-radius:2px;background:#558249;"></div>
<div style="position:absolute;top:856px;font-size:16px;line-height:16px;color:#d8d9da;font-weight:400;white-space:nowrap;letter-spacing:0.08px;left:830.2px;">tcdevices</div>
<div style="position:absolute;left:910.7px;top:861.6px;width:15.5px;height:4.5px;border-radius:2px;background:#caa83d;"></div>
<div style="position:absolute;top:856px;font-size:16px;line-height:16px;color:#d8d9da;font-weight:400;white-space:nowrap;letter-spacing:0.08px;left:931.9px;">ws</div>
<div style="position:absolute;left:1588.5px;top:503.8px;width:6px;height:6px;border-right:2px solid #5a5a5e;border-bottom:2px solid #5a5a5e;box-sizing:border-box;"></div>
<div style="position:absolute;left:1889.5px;top:503.8px;width:6px;height:6px;border-right:2px solid #5a5a5e;border-bottom:2px solid #5a5a5e;box-sizing:border-box;"></div>
<div style="position:absolute;left:1889.5px;top:877.5px;width:6px;height:6px;border-right:2px solid #5a5a5e;border-bottom:2px solid #5a5a5e;box-sizing:border-box;"></div>
<div style="position:absolute;left:997px;top:404px;width:182px;height:289px;background:#141414;border-radius:4px;"></div>
<div style="position:absolute;top:416.6px;font-size:16.3px;line-height:16.3px;color:#e3e3e3;font-weight:700;white-space:nowrap;letter-spacing:-0.05px;left:1012.5px;">2019-09-09 16:16:30</div>
<div style="position:absolute;left:1013px;top:451.3px;width:12px;height:3px;border-radius:1px;background:#82af74;"></div>
<div style="position:absolute;top:444.6px;font-size:17.33px;line-height:17.33px;color:#e3e3e3;font-weight:400;white-space:nowrap;letter-spacing:-0.55px;left:1029.5px;">auth:</div>
<div style="position:absolute;top:444.5px;font-size:16.2px;line-height:16.2px;color:#e3e3e3;font-weight:700;white-space:nowrap;letter-spacing:0px;left:165.79999999999995px;width:1000px;text-align:right;">0</div>
<div style="position:absolute;left:1013px;top:475.3px;width:12px;height:3px;border-radius:1px;background:#e3b84c;"></div>
<div style="position:absolute;top:468.6px;font-size:17.33px;line-height:17.33px;color:#e3e3e3;font-weight:400;white-space:nowrap;letter-spacing:-0.55px;left:1029.5px;">autotest:</div>
<div style="position:absolute;top:468.5px;font-size:16.2px;line-height:16.2px;color:#e3e3e3;font-weight:700;white-space:nowrap;letter-spacing:0px;left:165.79999999999995px;width:1000px;text-align:right;">0</div>
<div style="position:absolute;left:1013px;top:499.3px;width:12px;height:3px;border-radius:1px;background:#79ccd9;"></div>
<div style="position:absolute;top:492.6px;font-size:17.33px;line-height:17.33px;color:#e3e3e3;font-weight:400;white-space:nowrap;letter-spacing:-0.55px;left:1029.5px;">extention:</div>
<div style="position:absolute;top:492.5px;font-size:16.2px;line-height:16.2px;color:#e3e3e3;font-weight:700;white-space:nowrap;letter-spacing:0px;left:165.79999999999995px;width:1000px;text-align:right;">0.689</div>
<div style="position:absolute;left:1013px;top:523.3px;width:12px;height:3px;border-radius:1px;background:#e3884a;"></div>
<div style="position:absolute;top:516.6px;font-size:17.33px;line-height:17.33px;color:#e3e3e3;font-weight:400;white-space:nowrap;letter-spacing:-0.55px;left:1029.5px;">flow:</div>
<div style="position:absolute;top:516.5px;font-size:16.2px;line-height:16.2px;color:#e3e3e3;font-weight:700;white-space:nowrap;letter-spacing:0px;left:165.79999999999995px;width:1000px;text-align:right;">0</div>
<div style="position:absolute;left:1013px;top:547.3px;width:12px;height:3px;border-radius:1px;background:#d2544a;"></div>
<div style="position:absolute;top:540.6px;font-size:17.33px;line-height:17.33px;color:#e3e3e3;font-weight:400;white-space:nowrap;letter-spacing:-0.55px;left:1029.5px;">interface:</div>
<div style="position:absolute;top:540.5px;font-size:16.2px;line-height:16.2px;color:#e3e3e3;font-weight:700;white-space:nowrap;letter-spacing:0px;left:165.79999999999995px;width:1000px;text-align:right;">0</div>
<div style="position:absolute;left:1013px;top:571.3px;width:12px;height:3px;border-radius:1px;background:#2a75b3;"></div>
<div style="position:absolute;top:564.6px;font-size:17.33px;line-height:17.33px;color:#e3e3e3;font-weight:400;white-space:nowrap;letter-spacing:-0.55px;left:1029.5px;">message:</div>
<div style="position:absolute;top:564.5px;font-size:16.2px;line-height:16.2px;color:#e3e3e3;font-weight:700;white-space:nowrap;letter-spacing:0px;left:165.79999999999995px;width:1000px;text-align:right;">0.089</div>
<div style="position:absolute;left:1013px;top:595.3px;width:12px;height:3px;border-radius:1px;background:#af4aa1;"></div>
<div style="position:absolute;top:588.6px;font-size:17.33px;line-height:17.33px;color:#e3e3e3;font-weight:400;white-space:nowrap;letter-spacing:-0.55px;left:1029.5px;">project:</div>
<div style="position:absolute;top:588.5px;font-size:16.2px;line-height:16.2px;color:#e3e3e3;font-weight:700;white-space:nowrap;letter-spacing:0px;left:165.79999999999995px;width:1000px;text-align:right;">0.600</div>
<div style="position:absolute;left:1013px;top:619.3px;width:12px;height:3px;border-radius:1px;background:#6f5f98;"></div>
<div style="position:absolute;top:612.6px;font-size:17.33px;line-height:17.33px;color:#e3e3e3;font-weight:400;white-space:nowrap;letter-spacing:-0.55px;left:1029.5px;">public:</div>
<div style="position:absolute;top:612.5px;font-size:16.2px;line-height:16.2px;color:#e3e3e3;font-weight:700;white-space:nowrap;letter-spacing:0px;left:165.79999999999995px;width:1000px;text-align:right;">0</div>
<div style="position:absolute;left:1013px;top:643.3px;width:12px;height:3px;border-radius:1px;background:#558249;"></div>
<div style="position:absolute;top:636.6px;font-size:17.33px;line-height:17.33px;color:#e3e3e3;font-weight:400;white-space:nowrap;letter-spacing:-0.55px;left:1029.5px;">tcdevices:</div>
<div style="position:absolute;top:636.5px;font-size:16.2px;line-height:16.2px;color:#e3e3e3;font-weight:700;white-space:nowrap;letter-spacing:0px;left:165.79999999999995px;width:1000px;text-align:right;">1.178</div>
<div style="position:absolute;left:1013px;top:667.3px;width:12px;height:3px;border-radius:1px;background:#caa83d;"></div>
<div style="position:absolute;top:660.6px;font-size:17.33px;line-height:17.33px;color:#e3e3e3;font-weight:400;white-space:nowrap;letter-spacing:-0.55px;left:1029.5px;">ws:</div>
<div style="position:absolute;top:660.5px;font-size:16.2px;line-height:16.2px;color:#e3e3e3;font-weight:700;white-space:nowrap;letter-spacing:0px;left:165.79999999999995px;width:1000px;text-align:right;">0</div>
<div style="position:absolute;left:1913.5px;top:75.7px;width:6.5px;height:206.6px;border-radius:3px;background:linear-gradient(to bottom,#474b5c,#4a4a4d);"></div>
<svg style="position:absolute;left:1640px;top:810px" width="280" height="99" viewBox="0 0 280 99" fill="none" stroke="#dcdcdc" stroke-width="1.8" stroke-linecap="round" stroke-linejoin="round"><path d="M 20.57,46.20 C 19.84,53.13 18.39,64.06 19.48,69.17 C 20.21,72.08 24.58,72.08 27.86,71.72"/><path d="M 16.20,55.68 L 29.32,52.54"/><path d="M 28.23,63.48 C 33.33,64.06 38.44,63.33 40.63,59.69 C 42.08,56.77 39.17,56.41 36.98,57.86 C 33.33,60.42 31.88,67.71 37.71,69.53 C 42.08,70.63 47.19,68.80 50.47,66.62"/><path d="M 60.31,55.46 C 56.67,55.68 53.02,58.23 55.21,61.15 C 57.40,63.33 62.50,64.06 61.04,67.71 C 59.58,70.63 55.21,70.63 52.66,70.48"/><path d="M 69.43,46.20 C 68.70,53.13 67.61,64.06 68.33,69.17 C 69.06,72.08 73.44,72.08 76.72,71.72"/><path d="M 64.69,55.68 L 77.81,52.54"/><path d="M 76.72,63.48 C 81.82,64.06 86.93,63.33 89.12,59.69 C 90.57,56.77 87.66,56.41 85.47,57.86 C 81.82,60.42 80.37,67.71 86.20,69.53 C 90.57,70.63 95.68,68.80 99.32,66.25"/><path d="M 102.61,58.23 C 103.70,62.60 104.79,67.71 105.52,72.08"/><path d="M 104.06,63.33 C 106.25,58.23 109.17,54.58 113.18,53.13"/><path d="M 119.01,61.88 C 123.75,58.96 128.13,61.88 132.87,69.90"/><path d="M 119.59,72.92 C 117.40,43.75 118.13,21.88 123.96,13.13 C 128.34,5.83 138.54,6.56 142.19,18.96 C 145.84,32.08 131.25,48.13 121.04,53.96"/><path d="M 155.78,58.36 C 149.53,55.62 138.59,57.19 136.64,63.44 C 135.47,68.12 145.62,69.30 151.88,67.34 C 156.56,65.78 157.34,60.31 152.66,57.97"/><path d="M 160.08,56.02 L 162.19,70.08 L 166.72,56.80 C 170.62,57.97 176.88,65.00 180.00,66.95"/><path d="M 178.44,65.78 C 184.69,65.78 191.72,64.22 194.84,59.53 C 197.19,55.62 192.50,55.23 190.16,57.19 C 186.25,61.09 184.69,68.91 191.72,70.08 C 196.41,70.47 200.31,68.12 202.66,65.78"/><path d="M 222.58,58.75 C 217.50,58.36 213.59,61.09 213.98,65.00 C 214.77,68.91 222.97,68.52 228.05,66.56"/><path d="M 251.09,59.53 C 245.62,56.02 233.12,56.80 231.17,62.66 C 230.00,67.34 239.38,68.91 245.62,67.73 C 251.88,66.17 253.44,61.09 247.19,57.58"/><path d="M 252.66,55.23 C 254.22,60.31 255.78,65.78 256.95,70.08"/><path d="M 256.17,63.44 C 258.91,58.75 262.81,57.19 264.38,60.31 C 265.55,62.66 265.94,65.00 266.33,66.95"/><path d="M 265.94,63.44 C 268.28,60.31 272.19,59.53 273.36,61.88 C 274.14,63.44 274.53,65.78 274.92,67.34"/><circle cx="208.52" cy="68.52" r="1.3" fill="#dcdcdc" stroke="none"/></svg>
</body></html>
